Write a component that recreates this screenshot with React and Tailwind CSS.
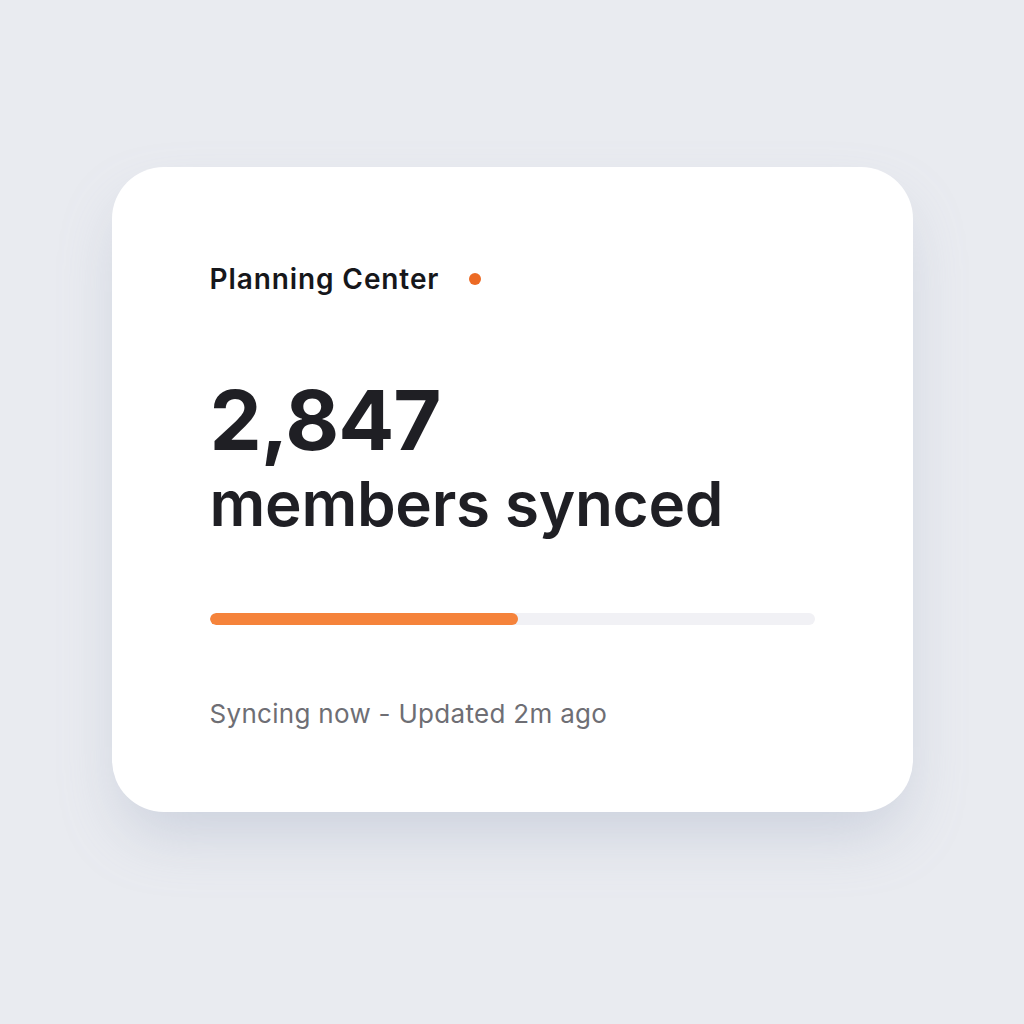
export default function App() {
  return (
    <div className="w-full h-[1024px] flex items-start justify-center bg-[#e9ebf0]" style={{ fontFamily: 'Inter, "Noto Sans", sans-serif' }}>
      <div className="mt-[167px] w-[801px] h-[645px] bg-white rounded-[52px] shadow-[0_30px_60px_-10px_rgba(150,160,185,0.35)] pl-[98px] pr-[98px] pt-[92px] flex flex-col">
        <div className="flex items-center h-[40px]">
          <span className="text-[28px] leading-[40px] font-semibold text-[#16171b] tracking-[0.9px]">Planning Center</span>
          <span className="ml-[30px] w-[12px] h-[12px] rounded-full bg-[#ec6a24]"></span>
        </div>
        <div className="mt-[76px] text-[83px] leading-[90px] font-bold text-[#1f1f24] tracking-[-1px]">2,847</div>
        <div className="mt-[4px] text-[62px] leading-[70px] font-semibold text-[#1f1f24] tracking-[-0.3px]">members synced</div>
        <div className="mt-[74px] h-[12px] w-full rounded-full bg-[#f1f1f5] overflow-hidden">
          <div className="h-full w-[51%] rounded-full bg-[#f5833b]"></div>
        </div>
        <div className="mt-[73px] text-[26px] leading-[32px] text-[#6e6e74] tracking-[0.3px]">Syncing now - Updated 2m ago</div>
      </div>
    </div>
  );
}
